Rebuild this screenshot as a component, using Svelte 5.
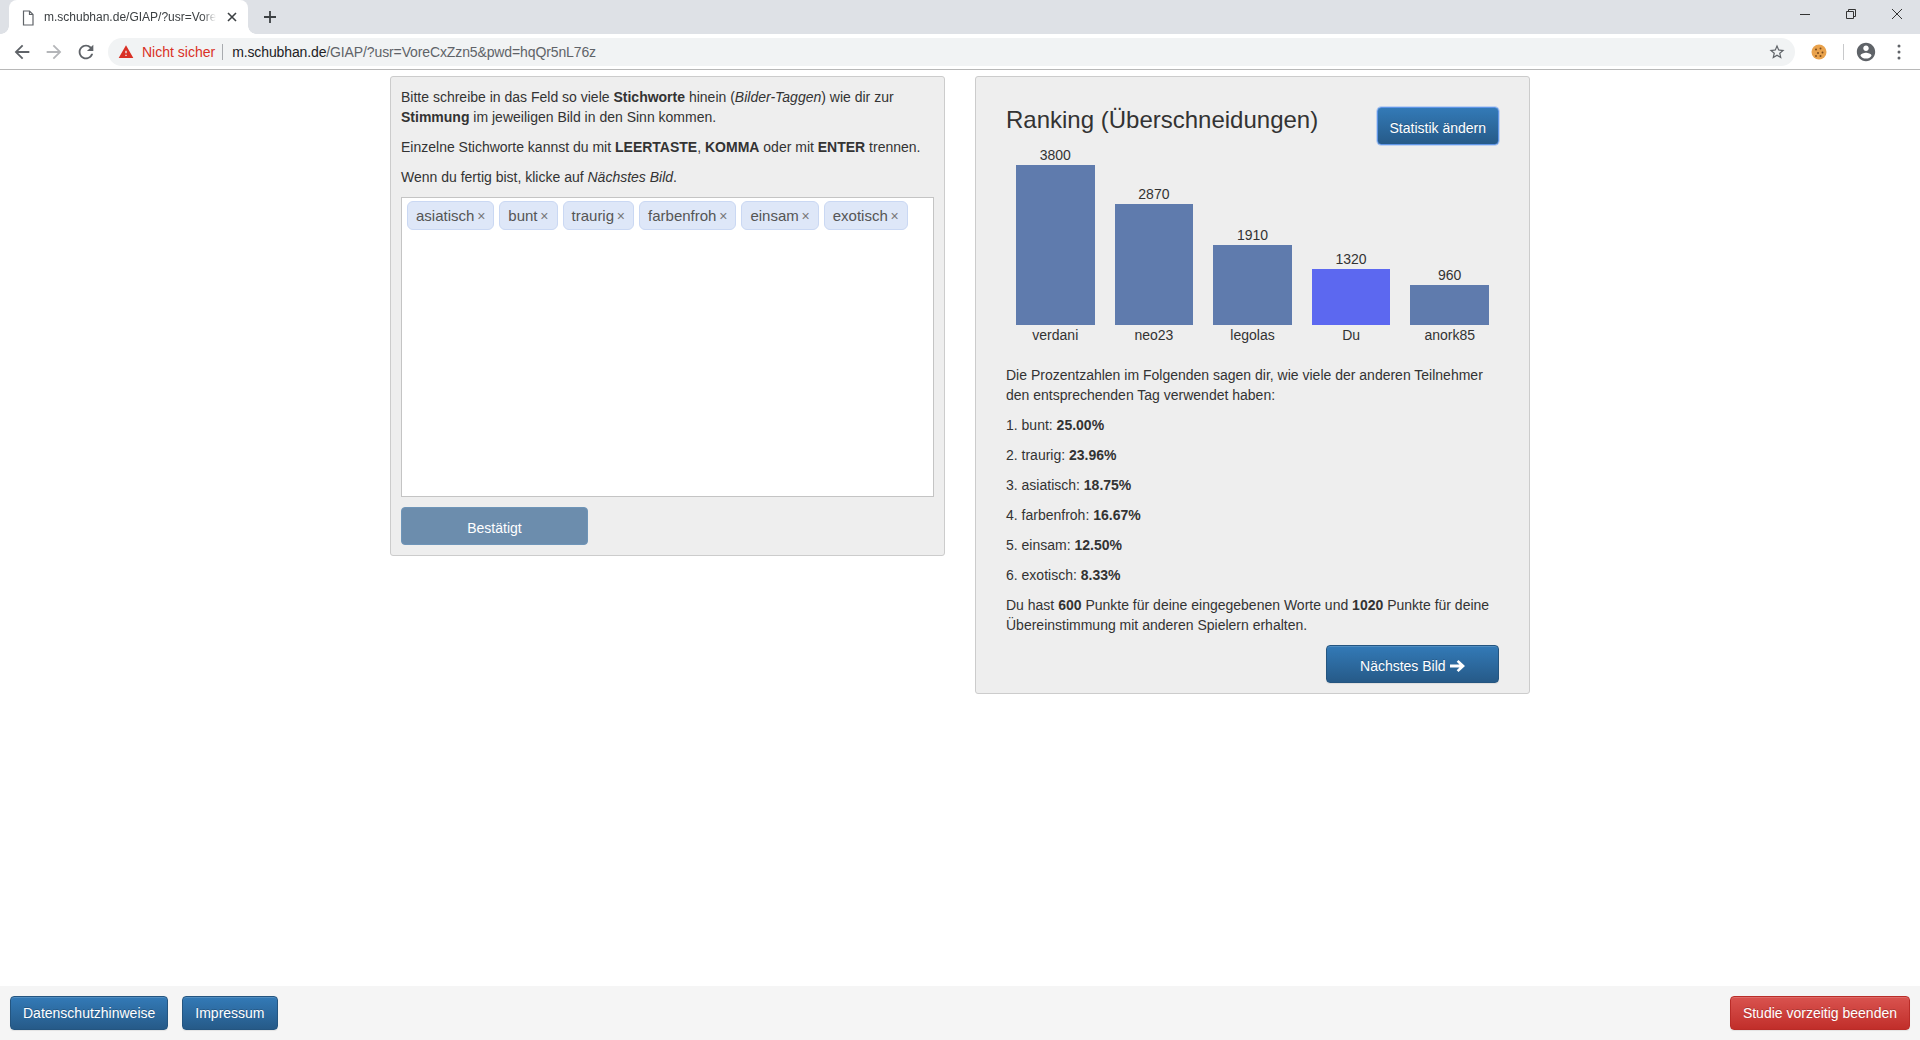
<script>
	const intro = ['asiatisch', 'bunt', 'traurig', 'farbenfroh', 'einsam', 'exotisch'];
	const bars = [
		{ name: 'verdani', value: 3800 },
		{ name: 'neo23', value: 2870 },
		{ name: 'legolas', value: 1910 },
		{ name: 'Du', value: 1320, self: true },
		{ name: 'anork85', value: 960 }
	];
	const ranks = [
		['bunt', '25.00%'],
		['traurig', '23.96%'],
		['asiatisch', '18.75%'],
		['farbenfroh', '16.67%'],
		['einsam', '12.50%'],
		['exotisch', '8.33%']
	];
</script>

<div class="window">
	<div class="tabstrip">
		<div class="tab">
			<svg class="doc" width="12" height="16" viewBox="0 0 12 16"><path d="M1.500 1h6L11 4.500v10.500h-9.500z M7.500 1v3.500H11" fill="none" stroke="#5f6368" stroke-width="1.200"/></svg>
			<span class="title">m.schubhan.de/GIAP/?usr=VoreC</span>
			<svg class="tabclose" width="10" height="10" viewBox="0 0 10 10"><path d="M1 1l8 8M9 1l-8 8" stroke="#3c4043" stroke-width="1.600"/></svg>
		</div>
		<svg class="newtab" width="12" height="12" viewBox="0 0 12 12"><path d="M6 0v12M0 6h12" stroke="#3c4043" stroke-width="1.800"/></svg>
		<div class="winctl">
			<span><svg width="12" height="12" viewBox="0 0 12 12"><path d="M1 6.500h10" stroke="#333" stroke-width="1"/></svg></span>
			<span><svg width="12" height="12" viewBox="0 0 12 12"><path d="M1.500 3.500h7v7h-7z M3.500 3.500v-2h7v7h-2" fill="none" stroke="#333" stroke-width="1"/></svg></span>
			<span><svg width="12" height="12" viewBox="0 0 12 12"><path d="M1 1l10 10M11 1l-10 10" stroke="#333" stroke-width="1"/></svg></span>
		</div>
	</div>
	<div class="toolbar">
		<svg class="nav" width="22" height="22" viewBox="0 0 24 24"><path fill="#5f6368" d="M20 11H7.830l5.590-5.590L12 4l-8 8 8 8 1.410-1.410L7.830 13H20v-2z"/></svg>
		<svg class="nav" width="22" height="22" viewBox="0 0 24 24"><path fill="#b4b6b9" d="M12 4l-1.410 1.410L16.170 11H4v2h12.170l-5.580 5.590L12 20l8-8z"/></svg>
		<svg class="nav" width="22" height="22" viewBox="0 0 24 24"><path fill="#5f6368" d="M17.650 6.350A7.958 7.958 0 0 0 12 4c-4.420 0-7.990 3.580-7.990 8s3.570 8 7.990 8c3.730 0 6.840-2.550 7.730-6h-2.080A5.990 5.990 0 0 1 12 18c-3.310 0-6-2.690-6-6s2.690-6 6-6c1.660 0 3.140.690 4.220 1.780L13 11h7V4l-2.350 2.350z"/></svg>
		<div class="omnibox">
			<svg class="warn" width="16" height="16" viewBox="0 0 24 24"><path fill="#d93025" d="M1 21h22L12 2 1 21zm12-3h-2v-2h2v2zm0-4h-2v-4h2v4z"/></svg>
			<span class="insecure">Nicht sicher</span>
			<span class="sep"></span>
			<span class="url"><b>m.schubhan.de</b>/GIAP/?usr=VoreCxZzn5&amp;pwd=hqQr5nL76z</span>
			<svg class="star" width="18" height="18" viewBox="0 0 24 24"><path fill="#5f6368" d="M22 9.240l-7.190-.620L12 2 9.190 8.630 2 9.240l5.460 4.730L5.820 21 12 17.270 18.180 21l-1.630-7.030L22 9.240zM12 15.400l-3.760 2.270 1-4.280-3.320-2.880 4.380-.380L12 6.100l1.710 4.040 4.380.380-3.320 2.880 1 4.280L12 15.400z"/></svg>
		</div>
		<svg class="cookie" width="16" height="16" viewBox="0 0 16 16">
			<circle cx="8" cy="8" r="7.500" fill="#e9a24c"/>
			<circle cx="5" cy="5.500" r="1" fill="#7a4a1c"/>
			<circle cx="9.500" cy="4.500" r="1" fill="#7a4a1c"/>
			<circle cx="11.500" cy="8.500" r="1" fill="#7a4a1c"/>
			<circle cx="7" cy="9" r="1" fill="#7a4a1c"/>
			<circle cx="5" cy="12" r="1" fill="#8a5522"/>
			<circle cx="9.500" cy="12" r="1" fill="#7a4a1c"/>
		</svg>
		<span class="tsep"></span>
		<svg class="account" width="22" height="22" viewBox="0 0 24 24"><path fill="#5f6368" d="M12 2C6.480 2 2 6.480 2 12s4.480 10 10 10 10-4.480 10-10S17.520 2 12 2zm0 3c1.660 0 3 1.340 3 3s-1.340 3-3 3-3-1.340-3-3 1.340-3 3-3zm0 14.200c-2.500 0-4.710-1.280-6-3.220.030-1.990 4-3.080 6-3.080 1.990 0 5.970 1.090 6 3.080-1.290 1.940-3.500 3.220-6 3.220z"/></svg>
		<svg class="dots" width="4" height="16" viewBox="0 0 4 16"><circle cx="2" cy="2" r="1.500" fill="#5f6368"/><circle cx="2" cy="8" r="1.500" fill="#5f6368"/><circle cx="2" cy="14" r="1.500" fill="#5f6368"/></svg>
	</div>

	<main class="container">
		<section class="well left">
			<p>Bitte schreibe in das Feld so viele <b>Stichworte</b> hinein (<i>Bilder-Taggen</i>) wie dir zur <b>Stimmung</b> im jeweiligen Bild in den Sinn kommen.</p>
			<p>Einzelne Stichworte kannst du mit <b>LEERTASTE</b>, <b>KOMMA</b> oder mit <b>ENTER</b> trennen.</p>
			<p>Wenn du fertig bist, klicke auf <i>Nächstes Bild</i>.</p>
			<div class="tagbox">
				{#each intro as tag}
					<span class="tag">{tag}<span class="x">×</span></span>
				{/each}
			</div>
			<button class="btn confirmed">Bestätigt</button>
		</section>

		<section class="well right">
			<div class="head">
				<h3>Ranking (Überschneidungen)</h3>
				<button class="btn primary tall focused">Statistik ändern</button>
			</div>
			<div class="chart">
				{#each bars as bar}
					<div class="col">
						<span class="num">{bar.value}</span>
						<div class="bar" class:self={bar.self} style="height: {bar.value * 160 / 3800}px"></div>
						<span class="name">{bar.name}</span>
					</div>
				{/each}
			</div>
			<p>Die Prozentzahlen im Folgenden sagen dir, wie viele der anderen Teilnehmer den entsprechenden Tag verwendet haben:</p>
			{#each ranks as rank, i}
				<p>{i + 1}. {rank[0]}: <b>{rank[1]}</b></p>
			{/each}
			<p>Du hast <b>600</b> Punkte für deine eingegebenen Worte und <b>1020</b> Punkte für deine Übereinstimmung mit anderen Spielern erhalten.</p>
			<div class="actions">
				<button class="btn primary tall next">Nächstes Bild
					<svg width="15" height="12" viewBox="0 0 15 12"><path fill="#fff" d="M8.500 0L15 6l-6.500 6-1.800-1.800L9.500 7.600H0V4.400h9.500L6.700 1.800z"/></svg>
				</button>
			</div>
		</section>
	</main>

	<footer>
		<button class="btn primary">Datenschutzhinweise</button>
		<button class="btn primary">Impressum</button>
		<button class="btn danger">Studie vorzeitig beenden</button>
	</footer>
</div>

<style>
	:global(body) {
		margin: 0;
		background: #fff;
	}

	.window {
		display: flex;
		flex-direction: column;
		height: 1040px;
		font-family: "Liberation Sans", Arial, sans-serif;
		font-size: 14px;
		line-height: 20px;
		color: #333;
	}

	.tabstrip {
		display: flex;
		align-items: center;
		height: 34px;
		background: #dee1e6;
	}

	.tab {
		position: relative;
		display: flex;
		align-items: center;
		width: 239px;
		height: 34px;
		margin-left: 9px;
		background: #fff;
		border-radius: 8px 8px 0 0;
		box-sizing: border-box;
		padding-left: 13px;
	}

	.tab::before,
	.tab::after {
		content: "";
		position: absolute;
		bottom: 0;
		width: 8px;
		height: 8px;
	}

	.tab::before {
		left: -8px;
		background: radial-gradient(circle at 0 0, transparent 7.500px, #fff 8px);
	}

	.tab::after {
		right: -8px;
		background: radial-gradient(circle at 100% 0, transparent 7.500px, #fff 8px);
	}

	.doc {
		flex: none;
		margin-top: 1px;
	}

	.title {
		width: 172px;
		margin-left: 10px;
		font-size: 12px;
		color: #3c4043;
		white-space: nowrap;
		-webkit-mask-image: linear-gradient(90deg, #000 92%, transparent);
		mask-image: linear-gradient(90deg, #000 92%, transparent);
	}

	.tabclose {
		margin-left: 11px;
	}

	.newtab {
		margin-left: 16px;
	}

	.winctl {
		display: flex;
		margin-left: auto;
		align-self: flex-start;
	}

	.winctl span {
		display: flex;
		align-items: center;
		justify-content: center;
		width: 46px;
		height: 28px;
	}

	.toolbar {
		display: flex;
		align-items: center;
		height: 36px;
		box-sizing: border-box;
		background: #fff;
		border-bottom: 1px solid #b8b8b8;
	}

	.nav {
		flex: none;
		margin-left: 10px;
	}

	.nav:first-child {
		margin-left: 11px;
	}

	.omnibox {
		display: flex;
		align-items: center;
		width: 1687px;
		height: 28px;
		margin-left: 11px;
		background: #f1f3f4;
		border-radius: 14px;
	}

	.warn {
		margin-left: 10px;
	}

	.insecure {
		margin-left: 8px;
		color: #d93025;
		white-space: nowrap;
	}

	.sep {
		width: 1px;
		height: 16px;
		margin: 0 9px 0 7px;
		background: #a8abaf;
	}

	.url {
		color: #5f6368;
		letter-spacing: -0.12px;
		white-space: nowrap;
	}

	.url b {
		font-weight: normal;
		color: #202124;
	}

	.star {
		margin-left: auto;
		margin-right: 9px;
	}

	.cookie {
		margin-left: 16px;
	}

	.tsep {
		width: 1px;
		height: 16px;
		margin-left: 16px;
		background: #c8c9cb;
	}

	.account {
		margin-left: 11px;
	}

	.dots {
		margin-left: 20px;
	}

	.container {
		display: grid;
		grid-template-columns: 555px 555px;
		column-gap: 30px;
		align-items: start;
		width: 1140px;
		margin: 6px auto 0;
	}

	.well {
		background: #eee;
		border: 1px solid #ccc;
		border-radius: 3px;
		box-sizing: border-box;
	}

	.left {
		padding: 10px;
	}

	.right {
		padding: 30px 30px 10px;
	}

	p {
		margin: 0 0 10px;
	}

	.tagbox {
		display: flex;
		align-items: flex-start;
		gap: 5px;
		height: 300px;
		box-sizing: border-box;
		margin: 10px 0;
		padding: 3px 5px;
		background: #fff;
		border: 1px solid #c4c4c4;
	}

	.tag {
		padding: 4px 8px 2px;
		font-size: 15px;
		line-height: 20.500px;
		color: #555;
		background: #dee7f8;
		border: 1px solid #cad8f3;
		border-radius: 6px;
	}

	.x {
		margin-left: 2.800px;
		font-size: 14px;
		color: #777;
	}

	.btn {
		box-sizing: border-box;
		height: 34px;
		padding: 0 12px;
		font: inherit;
		color: #fff;
		border: 1px solid transparent;
		border-radius: 4px;
		white-space: nowrap;
	}

	.primary {
		background: linear-gradient(#337ab7, #265a88);
		border-color: #245580;
		text-shadow: 0 -1px 0 rgba(0, 0, 0, 0.2);
		box-shadow: inset 0 1px 0 rgba(255, 255, 255, 0.15), 0 1px 1px rgba(0, 0, 0, 0.075);
	}

	.danger {
		margin-left: auto;
		background: linear-gradient(#d9534f, #c12e2a);
		border-color: #b92c28;
		text-shadow: 0 -1px 0 rgba(0, 0, 0, 0.2);
		box-shadow: inset 0 1px 0 rgba(255, 255, 255, 0.15), 0 1px 1px rgba(0, 0, 0, 0.075);
	}

	.tall {
		height: 38px;
		padding-top: 4px;
	}

	.confirmed {
		display: block;
		width: 187px;
		height: 38px;
		padding-top: 4px;
		background: #6c8dad;
		border-color: #6f95b8;
	}

	.primary.focused {
		border-color: #5f95e6;
		box-shadow: 0 0 0 0.500px #8fb6f0;
	}

	.head {
		display: flex;
		align-items: flex-start;
		justify-content: space-between;
	}

	h3 {
		margin: 0;
		font-size: 24px;
		font-weight: 500;
		line-height: 26px;
		color: #333;
	}

	.chart {
		display: flex;
		align-items: flex-end;
		height: 200px;
		margin-bottom: 20px;
	}

	.col {
		flex: 1;
		display: flex;
		flex-direction: column;
		align-items: center;
	}

	.bar {
		align-self: stretch;
		margin: 0 10px;
		background: #5f7bad;
	}

	.bar.self {
		background: #5c68f0;
	}

	.actions {
		display: flex;
		justify-content: flex-end;
	}

	.next {
		padding-left: 33.500px;
		padding-right: 33.500px;
	}

	.next svg {
		vertical-align: -1px;
	}

	footer {
		display: flex;
		gap: 14px;
		margin-top: auto;
		padding: 10px;
		background: #f5f5f5;
	}

	footer .btn {
		flex: none;
	}
</style>
